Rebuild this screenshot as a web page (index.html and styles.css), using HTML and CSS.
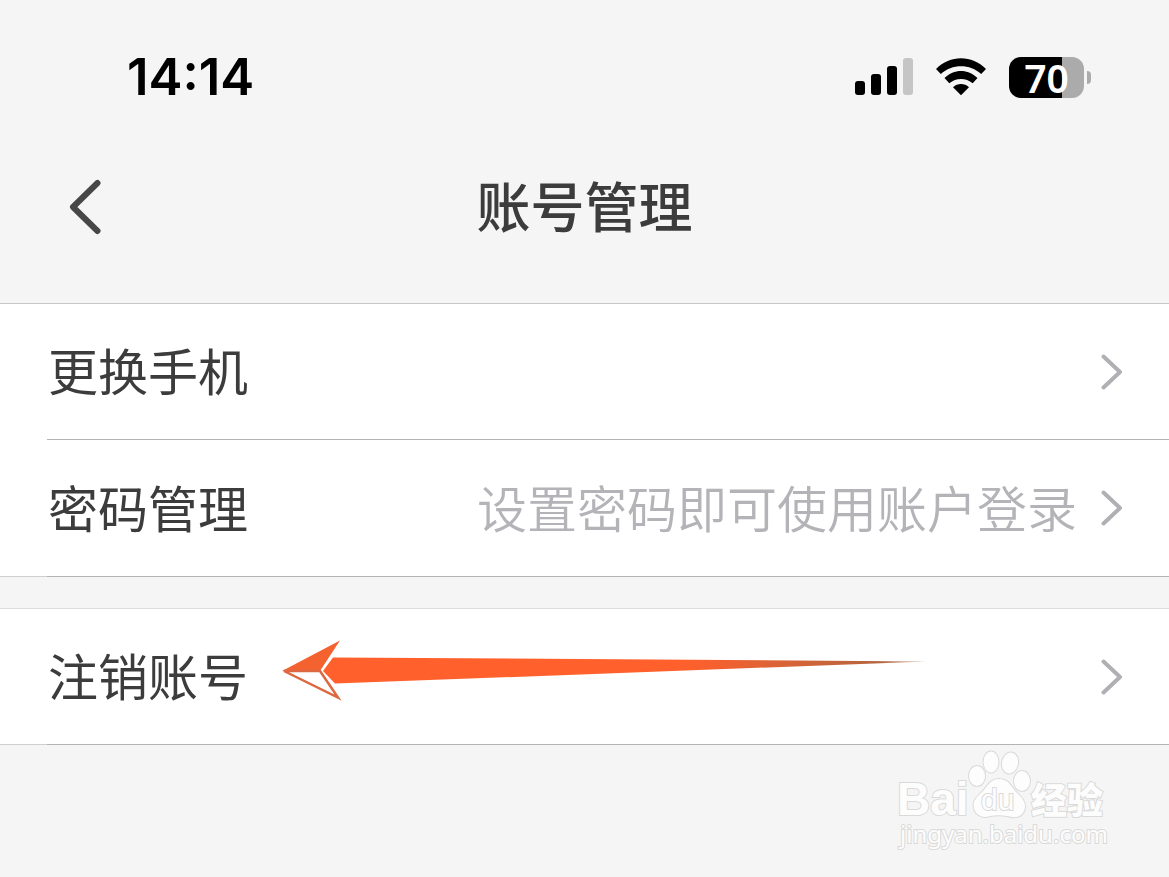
FILE: index.html
```
<!DOCTYPE html>
<html lang="zh-CN">
<head>
    <meta charset="UTF-8">
    <meta name="viewport" content="width=device-width, initial-scale=1.0">
    <title>账号管理</title>
    <link rel="stylesheet" href="styles.css">
</head>
<body>
    <div class="status-bar">
        <time class="clock">14:14</time>
        <div class="status-icons">
            <svg class="signal" width="58" height="38" viewBox="0 0 58 38" aria-hidden="true">
                <rect x="0" y="23" width="10" height="14" rx="3"/>
                <rect x="16" y="16" width="10" height="21" rx="3"/>
                <rect x="32" y="8" width="10" height="29" rx="3"/>
                <rect x="48" y="0" width="10" height="37" rx="3" fill="#c5c5c5"/>
            </svg>
            <svg class="wifi" width="52" height="38" viewBox="0 0 52 38" aria-hidden="true">
                <path d="M1 11C15-3.500 37-3.500 51 11L46.200 16C35 5.500 17 5.500 5.800 16Z"/>
                <path d="M9.500 20C19 10.500 33 10.500 42.500 20L37.700 25.200C31 19.500 21 19.500 14.300 25.200Z"/>
                <path d="M18 29.200C22.500 25 29.500 25 34 29.200L26 37.200Z"/>
            </svg>
            <div class="battery">
                <span class="battery-level">70</span>
            </div>
        </div>
    </div>

    <header class="nav-bar">
        <button type="button" class="back" aria-label="返回">
            <svg width="34" height="56" viewBox="0 0 34 56" aria-hidden="true">
                <path d="M29.500 4L5 28L29.500 52" fill="none" stroke="#474747" stroke-width="6" stroke-linecap="round" stroke-linejoin="round"/>
            </svg>
        </button>
        <h1>账号管理</h1>
    </header>

    <main>
        <nav class="group">
            <a href="#" class="row">
                <span class="label">更换手机</span>
                <svg class="chevron" width="22" height="36" viewBox="0 0 22 36" aria-hidden="true"><path d="M2.500 2.500L19 18L2.500 33.500"/></svg>
            </a>
            <a href="#" class="row">
                <span class="label">密码管理</span>
                <span class="hint">设置密码即可使用账户登录</span>
                <svg class="chevron" width="22" height="36" viewBox="0 0 22 36" aria-hidden="true"><path d="M2.500 2.500L19 18L2.500 33.500"/></svg>
            </a>
        </nav>

        <nav class="group">
            <a href="#" class="row">
                <span class="label">注销账号</span>
                <svg class="arrow" width="646" height="62" viewBox="0 0 646 62" aria-hidden="true">
                    <defs>
                        <linearGradient id="tail" x1="0" x2="1" y1="0" y2="0">
                            <stop offset="0.6" stop-color="#ff602c"/>
                            <stop offset="0.92" stop-color="#b5653f"/>
                            <stop offset="1" stop-color="#d8c4b8"/>
                        </linearGradient>
                    </defs>
                    <path d="M52 17.500L300 19L646 21.500L300 34.500L54 43.500L42 31Z" fill="url(#tail)"/>
                    <path d="M1 31L59 0.500L39 31Z" fill="#f4622f"/>
                    <path d="M3 31H39L57 57.500Z" fill="#fff" stroke="#dc6740" stroke-width="2.500"/>
                </svg>
                <svg class="chevron" width="22" height="36" viewBox="0 0 22 36" aria-hidden="true"><path d="M2.500 2.500L19 18L2.500 33.500"/></svg>
            </a>
        </nav>
    </main>

    <!-- marca de agua -->
    <svg class="watermark" width="216" height="110" viewBox="0 0 216 110">
        <g class="mark">
            <text class="bai" x="2" y="70">Bai</text>
            <ellipse cx="82" cy="31" rx="8" ry="10"/>
            <ellipse cx="96" cy="17" rx="7.500" ry="10.500"/>
            <ellipse cx="115" cy="18" rx="8" ry="10.500" transform="rotate(12 115 18)"/>
            <ellipse cx="127" cy="36" rx="8" ry="10"/>
            <path d="M104 34C113 34 116 41 121 47C128 53 132 59 129 66C126 73 119 73 112 71C106 70 101 70 95 71C87 74 80 69 79 63C77 56 82 52 87 47C93 41 95 34 104 34Z"/>
            <text class="du" x="86" y="65">du</text>
            <text class="jingyan" x="136" y="69">经验</text>
            <text class="site" x="5" y="98">jingyan.baidu.com</text>
        </g>
    </svg>
</body>
</html>
```
FILE: styles.css
```
* {
    box-sizing: border-box;
}

body {
    position: relative;
    min-height: 100vh;
    margin: 0;
    font-family: 'Noto Sans CJK SC', sans-serif;
    background-color: #f5f5f5;
    color: #3c3c3c;
}

/* Barra de estado */
.status-bar {
    display: flex;
    justify-content: space-between;
    align-items: center;
    height: 112px;
    padding: 42px 85px 0 127px;
    color: #000;
}

.clock {
    font-family: Inter, sans-serif;
    font-size: 51px;
    font-weight: 600;
    line-height: 68px;
}

.status-icons {
    display: flex;
    align-items: center;
    gap: 22px;
}

.battery {
    position: relative;
    width: 75px;
    height: 41px;
    border-radius: 12px;
    background: linear-gradient(to right, #000 53px, #ababab 53px);
    text-align: center;
}

.battery::after {
    content: '';
    position: absolute;
    left: 78px;
    top: 14px;
    width: 4px;
    height: 13px;
    border-radius: 0 4px 4px 0;
    background-color: #ababab;
}

.battery-level {
    font-family: 'Noto Sans', sans-serif;
    font-size: 39px;
    font-weight: 600;
    line-height: 41px;
    color: #fff;
}

/* Encabezado */
.nav-bar {
    position: relative;
    display: flex;
    justify-content: center;
    align-items: center;
    height: 192px;
    padding-bottom: 2px;
    border-bottom: 1px solid #c8c8c8;
}

.nav-bar h1 {
    margin: 0;
    padding-bottom: 4px;
    font-size: 54px;
    font-weight: 500;
    line-height: 80px;
}

.back {
    position: absolute;
    left: 68px;
    padding: 0;
    border: none;
    background: none;
    cursor: pointer;
}

.back svg {
    display: block;
}

/* Lista de opciones */
.group + .group {
    margin-top: 31px;
    border-top: 1px solid #dcdcdc;
}

.row {
    position: relative;
    display: flex;
    align-items: center;
    height: 136px;
    padding: 0 46px 0 48px;
    border-bottom: 1px solid;
    border-image: linear-gradient(to right, #fff 48px, #b4b4b4 48px) 1;
    background-color: #fff;
    color: inherit;
    text-decoration: none;
}

.row:last-child {
    height: 137px;
    border-image: linear-gradient(to right, #d0d0d0 48px, #b4b4b4 48px) 1;
}

.group + .group .row {
    height: 136px;
}

.label,
.hint {
    padding-bottom: 5px;
    font-size: 50px;
    font-weight: 400;
    line-height: 74px;
}

.hint {
    margin-left: auto;
    font-weight: 350;
    color: #b4b4b8;
}

.chevron {
    flex: none;
    margin-left: auto;
    fill: none;
    stroke: #b0b0b4;
    stroke-width: 4;
    stroke-linecap: round;
    stroke-linejoin: round;
}

.hint + .chevron {
    margin-left: 24px;
}

.arrow {
    position: absolute;
    left: 281px;
    top: 31px;
}

/* Marca de agua */
.watermark {
    position: absolute;
    right: 58px;
    bottom: 22px;
}

.mark {
    fill: #fdfdfd;
    stroke: #dadada;
    stroke-width: 2px;
    paint-order: stroke;
}

.bai {
    font-family: 'Liberation Sans', sans-serif;
    font-size: 46px;
    font-weight: 700;
}

.du {
    font-family: 'Liberation Sans', sans-serif;
    font-size: 30px;
}

.jingyan {
    font-size: 36px;
    font-weight: 900;
}

.site {
    font-family: 'Noto Sans', sans-serif;
    font-size: 24px;
}
```
